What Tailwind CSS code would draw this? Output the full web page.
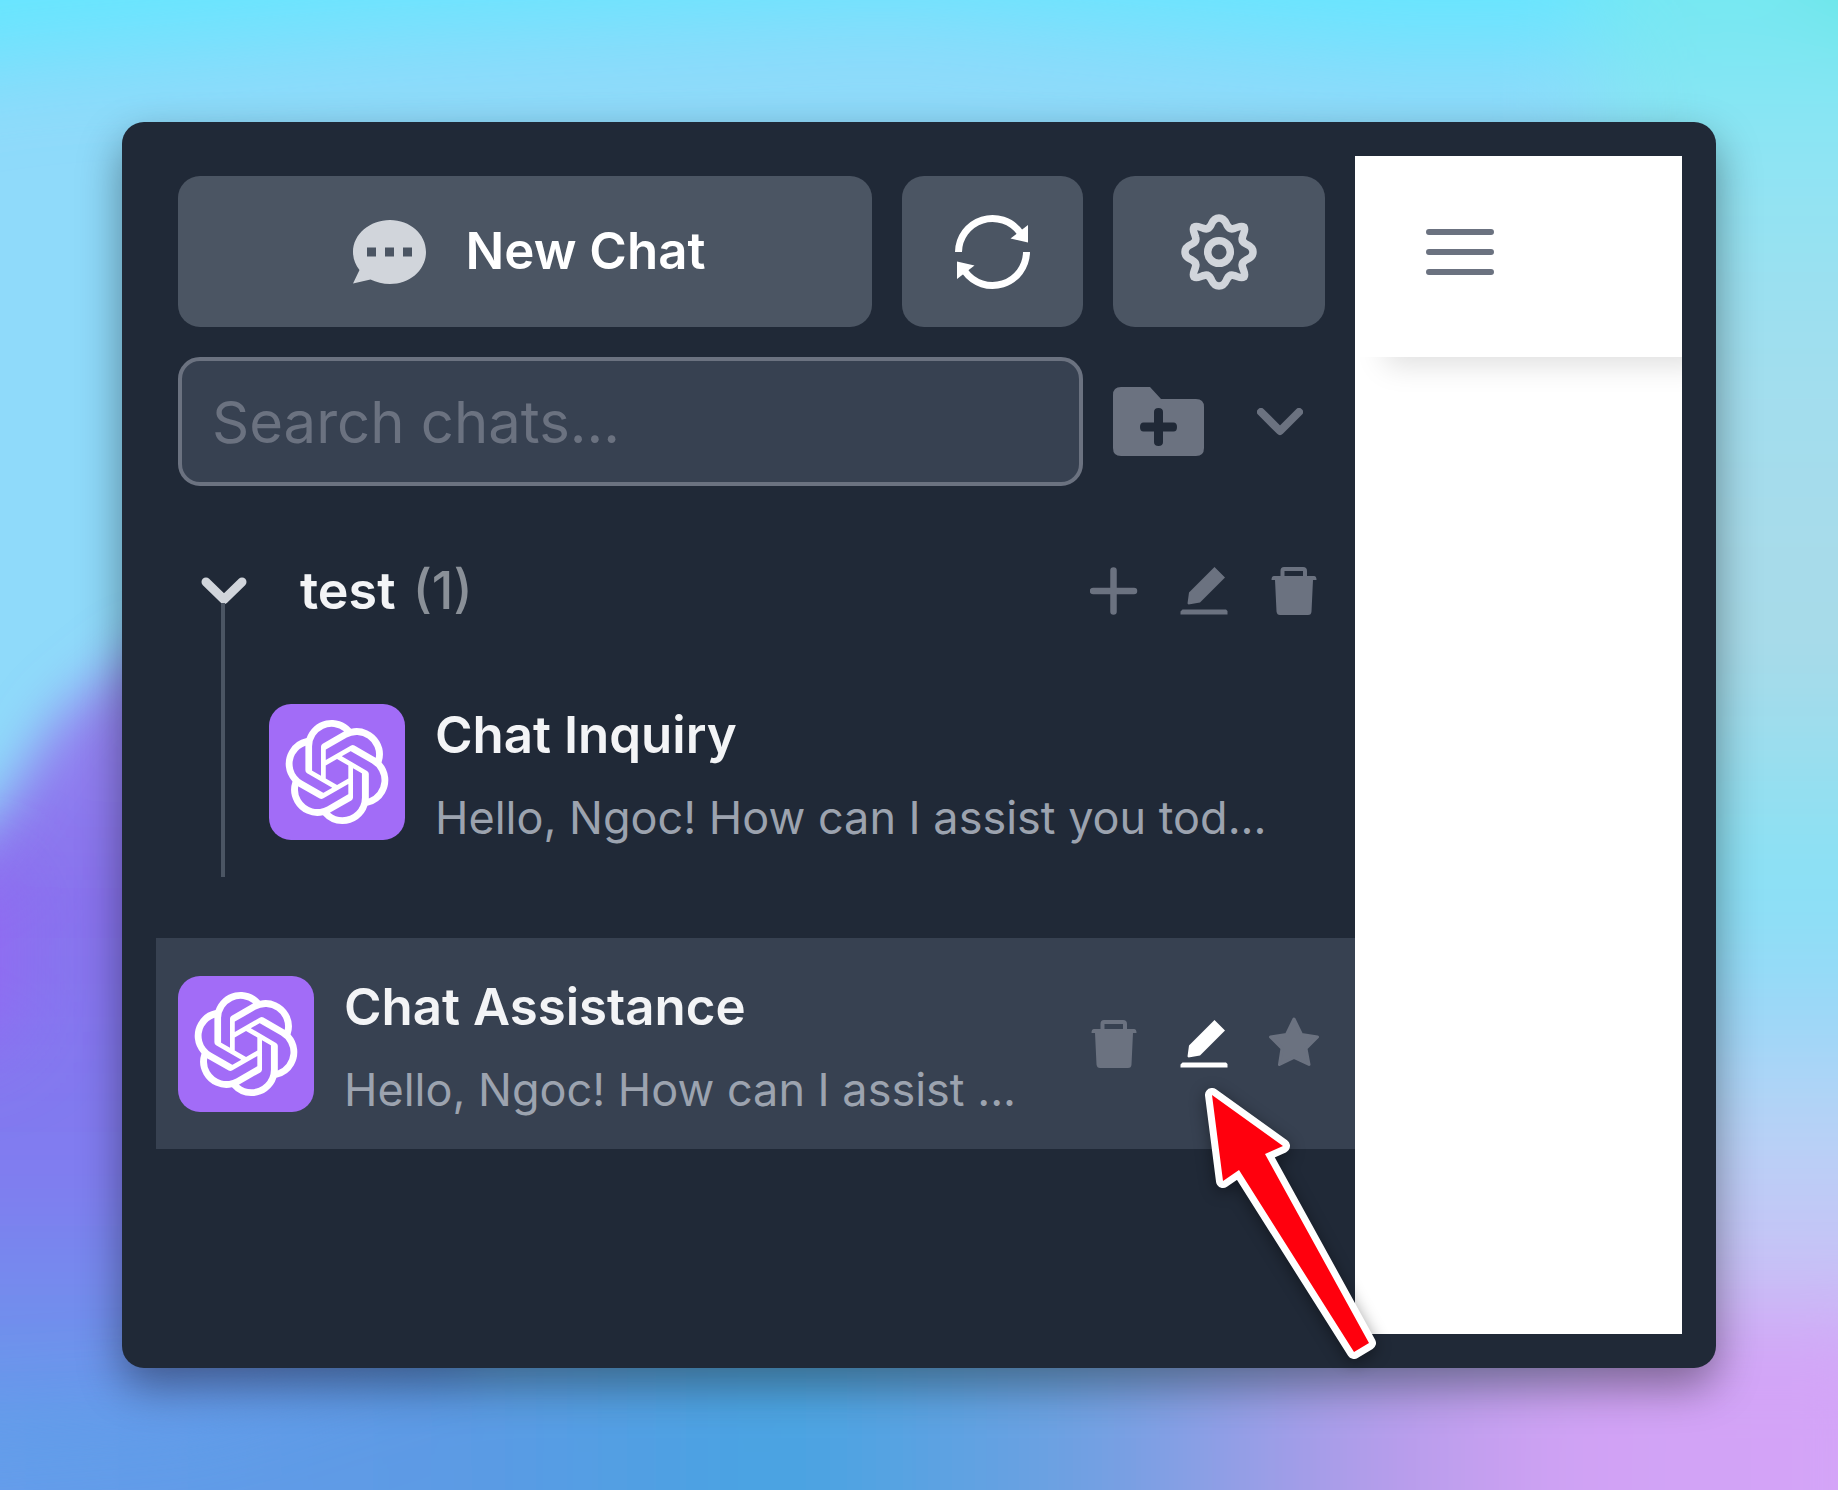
<!DOCTYPE html>
<html lang="en">

<head>
    <meta charset="UTF-8">
    <meta name="viewport" content="width=device-width, initial-scale=1.0">
    <title>Chats</title>
    <script src="https://cdn.jsdelivr.net/npm/@tailwindcss/browser@4"></script>
</head>

<body class="relative flex min-h-screen p-[122px] overflow-hidden bg-[#86d8f8] font-['Inter',sans-serif]">
    <!-- Shared icons -->
    <svg class="absolute size-0" aria-hidden="true">
        <symbol id="icon-trash" viewBox="0 0 48 48">
            <path fill-rule="evenodd" d="M14 0H33Q37 0 37 4V9H44Q46.500 9 46.500 13H43L41.500 44.500Q41.300 48 38 48H10Q7 48 6.500 44.500L5 13H1.500Q1.500 9 4 9H10.500V4Q10.500 0 14 0ZM14.500 4V9H33V4Z" />
        </symbol>
        <symbol id="icon-edit" viewBox="0 0 48 48">
            <path d="M34.500 0L45 10.500L20 35.500L8.500 37.500L7.500 36.500L9 25.500ZM2.500 42.500H46L47.500 44V47.500H.5V44.500Z" />
        </symbol>
        <symbol id="icon-openai" viewBox="0 0 24 24">
            <path d="M22.2819 9.8211a5.9847 5.9847 0 0 0-.5157-4.9108 6.0462 6.0462 0 0 0-6.5098-2.9A6.0651 6.0651 0 0 0 4.9807 4.1818a5.9847 5.9847 0 0 0-3.9977 2.9 6.0462 6.0462 0 0 0 .7427 7.0966 5.98 5.98 0 0 0 .511 4.9107 6.051 6.051 0 0 0 6.5146 2.9001A5.9847 5.9847 0 0 0 13.2599 24a6.0557 6.0557 0 0 0 5.7718-4.2058 5.9894 5.9894 0 0 0 3.9977-2.9001 6.0557 6.0557 0 0 0-.7475-7.0729zm-9.022 12.6081a4.4755 4.4755 0 0 1-2.8764-1.0408l.1419-.0804 4.7783-2.7582a.7948.7948 0 0 0 .3927-.6813v-6.7369l2.02 1.1686a.071.071 0 0 1 .038.052v5.5826a4.504 4.504 0 0 1-4.4945 4.4944zm-9.6607-4.1254a4.4708 4.4708 0 0 1-.5346-3.0137l.142.0852 4.783 2.7582a.7712.7712 0 0 0 .7806 0l5.8428-3.3685v2.3324a.0804.0804 0 0 1-.0332.0615L9.74 19.9502a4.4992 4.4992 0 0 1-6.1408-1.6464zM2.3408 7.8956a4.485 4.485 0 0 1 2.3655-1.9728V11.6a.7664.7664 0 0 0 .3879.6765l5.8144 3.3543-2.0201 1.1685a.0757.0757 0 0 1-.071 0l-4.8303-2.7865A4.504 4.504 0 0 1 2.3408 7.872zm16.5963 3.8558L13.1038 8.364 15.1192 7.2a.0757.0757 0 0 1 .071 0l4.8303 2.7913a4.4944 4.4944 0 0 1-.6765 8.1042v-5.6772a.79.79 0 0 0-.407-.667zm2.0107-3.0231l-.142-.0852-4.7735-2.7818a.7759.7759 0 0 0-.7854 0L9.409 9.2297V6.8974a.0662.0662 0 0 1 .0284-.0615l4.8303-2.7866a4.4992 4.4992 0 0 1 6.6802 4.66zM8.3065 12.863l-2.02-1.1638a.0804.0804 0 0 1-.038-.0567V6.0742a4.4992 4.4992 0 0 1 7.3757-3.4537l-.142.0805L8.704 5.459a.7948.7948 0 0 0-.3927.6813zm1.0976-2.3654l2.602-1.4998 2.6069 1.4998v2.9994l-2.5974 1.4997-2.6067-1.4997Z" />
        </symbol>
    </svg>

    <!-- Wallpaper -->
    <svg class="absolute inset-0 w-full h-full" viewBox="0 0 1838 1490" preserveAspectRatio="none" aria-hidden="true">
        <defs>
            <filter id="soft" x="-50%" y="-50%" width="200%" height="200%">
                <feGaussianBlur stdDeviation="45" />
            </filter>
            <filter id="edge" x="-50%" y="-50%" width="200%" height="200%">
                <feGaussianBlur stdDeviation="26" />
            </filter>
            <linearGradient id="right" gradientUnits="userSpaceOnUse" x1="0" y1="0" x2="0" y2="1490">
                <stop offset="0" stop-color="#74e8f2" />
                <stop offset=".1" stop-color="#8ee4f4" />
                <stop offset=".25" stop-color="#a2deee" />
                <stop offset=".43" stop-color="#a9dae8" />
                <stop offset=".59" stop-color="#88e2f5" />
                <stop offset=".67" stop-color="#98d8f8" />
                <stop offset=".76" stop-color="#b8d2f6" />
                <stop offset=".86" stop-color="#c8c0f6" />
                <stop offset="1" stop-color="#d3a2f6" />
            </linearGradient>
            <linearGradient id="left" gradientUnits="userSpaceOnUse" x1="0" y1="700" x2="0" y2="1490">
                <stop offset="0" stop-color="#9384f0" />
                <stop offset=".25" stop-color="#8872ee" />
                <stop offset=".6" stop-color="#807cf0" />
                <stop offset=".8" stop-color="#7090ec" />
                <stop offset="1" stop-color="#5ba2e8" />
            </linearGradient>
            <linearGradient id="bottom" gradientUnits="userSpaceOnUse" x1="0" y1="0" x2="1838" y2="0">
                <stop offset="0" stop-color="#659ceb" />
                <stop offset=".25" stop-color="#5c9ae4" />
                <stop offset=".43" stop-color="#48a4e2" />
                <stop offset=".6" stop-color="#72a0e2" />
                <stop offset=".75" stop-color="#b49cea" />
                <stop offset=".85" stop-color="#d0a2f4" />
                <stop offset="1" stop-color="#d4a4f8" />
            </linearGradient>
        </defs>
        <rect width="1838" height="1490" fill="#8fdafa" />
        <g filter="url(#soft)">
            <path d="M-200 -200H2038V40L1400 50L900 10L400 30L0 60L-200 100Z" fill="#66e6ff" />
            <path d="M1600 -200H2038V1700H1600Z" fill="url(#right)" />
            <path d="M1740 -200H2038V60L1838 20Z" fill="#64e6e2" />
        </g>
        <path d="M-100 920L0 810L60 715L140 650L400 600L500 1650H-100Z" fill="url(#left)" filter="url(#edge)" />
        <path d="M-200 880L10 880L10 1030L-200 1060Z" fill="#9468f4" filter="url(#soft)" />
        <path d="M-200 1440L200 1410L450 1330H1900V1700H-200Z" fill="url(#bottom)" filter="url(#soft)" />
    </svg>

    <main class="relative flex flex-1 min-w-0 rounded-[22px] bg-[#202937] p-[34px] shadow-[0_18px_44px_rgb(0_0_0/0.4)]">
        <!-- Sidebar -->
        <aside class="flex flex-1 min-w-0 flex-col pt-5">
            <div class="grid grid-cols-[1fr_181px_212px] gap-[30px] pl-[22px] pr-[30px]">
                <button class="flex h-[151px] items-center justify-center gap-10 rounded-[22px] bg-[#4b5563] pl-2 text-[51px] font-semibold text-white">
                    <svg class="w-[73px] h-[64px] text-[#d1d5db]" viewBox="0 0 73 64" fill="currentColor">
                        <path fill-rule="evenodd" d="M37 0C57 0 73 14 73 32S57 64 37 64C30 64 23 62 17.500 59.500L0 63.500L6.500 50C2.500 45 0 39 0 32C0 14 17 0 37 0ZM14 27.500V36.500H23V27.500ZM32 27.500V36.500H41V27.500ZM50 27.500V36.500H59V27.500Z" />
                    </svg>
                    New Chat
                </button>
                <button aria-label="Refresh" class="flex items-center justify-center rounded-[22px] bg-[#4b5563] text-white">
                    <svg class="w-[75px] h-[76px]" viewBox="0 0 75 76" fill="none">
                        <path d="M3.500 38A34 34 0 0 1 65 18.500M71.500 38A34 34 0 0 1 10 57.500" stroke="currentColor" stroke-width="7" />
                        <path d="M73 11V28.500L55.500 24.500ZM2 65V47.500L19.500 51.500Z" fill="currentColor" />
                    </svg>
                </button>
                <button aria-label="Settings" class="flex items-center justify-center rounded-[22px] bg-[#4b5563] text-[#d1d5db]">
                    <svg class="w-[76px] h-[76px]" viewBox="-38 -38 76 76" fill="none" stroke="currentColor" stroke-width="7.500">
                        <circle r="11.300" />
                        <path d="M0 -34C5.500 -34 6.500 -30 8 -27C9.500 -24 12 -22.500 15 -23.500C19 -24.500 22 -27 25 -25C27 -22 24.500 -19 23.500 -15C22.500 -12 24 -9.500 27 -8C30 -6.500 34 -5.500 34 0C34 5.500 30 6.500 27 8C24 9.500 22.500 12 23.500 15C24.500 19 27 22 25 25C22 27 19 24.500 15 23.500C12 22.500 9.500 24 8 27C6.500 30 5.500 34 0 34C-5.500 34 -6.500 30 -8 27C-9.500 24 -12 22.500 -15 23.500C-19 24.500 -22 27 -25 25C-27 22 -24.500 19 -23.500 15C-22.500 12 -24 9.500 -27 8C-30 6.500 -34 5.500 -34 0C-34 -5.500 -30 -6.500 -27 -8C-24 -9.500 -22.500 -12 -23.500 -15C-24.500 -19 -27 -22 -25 -25C-22 -27 -19 -24.500 -15 -23.500C-12 -22.500 -9.500 -24 -8 -27C-6.500 -30 -5.500 -34 0 -34Z" />
                    </svg>
                </button>
            </div>

            <div class="mt-[30px] grid grid-cols-[1fr_212px] items-center gap-[30px] pl-[22px] pr-[30px]">
                <input type="search" aria-label="Search chats" placeholder="Search chats..."
                    class="h-[129px] w-full min-w-0 rounded-[22px] border-4 border-[#6b7280] bg-[#374151] px-[30px] text-[58px] text-white placeholder:text-[#6b7280] outline-none">
                <div class="flex items-center justify-between pr-[22px] text-[#6b7280]">
                    <button aria-label="New folder">
                        <svg class="block w-[91px] h-[69px]" viewBox="0 0 91 69" fill="currentColor">
                            <path fill-rule="evenodd" d="M8 0H37L48 12H83Q91 12 91 20V61Q91 69 83 69H8Q0 69 0 61V8Q0 0 8 0ZM45.500 21Q41 21 41 25V35.500H30.500Q27 35.500 27 40Q27 44.500 30.500 44.500H41V55Q41 59 45.500 59Q50 59 50 55V44.500H60.500Q64 44.500 64 40Q64 35.500 60.500 35.500H50V25Q50 21 45.500 21Z" />
                        </svg>
                    </button>
                    <button aria-label="Sort">
                        <svg class="block w-[46px] h-[28px]" viewBox="0 0 46 28" fill="none" stroke="currentColor" stroke-width="8" stroke-linecap="round" stroke-linejoin="round">
                            <path d="M4 4L23 23L42 4" />
                        </svg>
                    </button>
                </div>
            </div>

            <!-- Folder -->
            <section class="relative mt-[52px]">
                <div class="flex h-[106px] items-center pl-[45px] pr-[37px]">
                    <button aria-label="Collapse folder" class="text-[#d1d5db]">
                        <svg class="block w-[46px] h-[28px]" viewBox="0 0 46 28" fill="none" stroke="currentColor" stroke-width="9" stroke-linecap="round" stroke-linejoin="round">
                            <path d="M5 5L23 22.500L41 5" />
                        </svg>
                    </button>
                    <h2 class="ml-[53px] flex-1 text-[52px] font-semibold text-[#f3f4f6]">test <span class="ml-1 text-[#8a9098] font-medium">(1)</span></h2>
                    <div class="flex items-center gap-[42px] text-[#6b7280]">
                        <button aria-label="Add chat">
                            <svg class="block size-12" viewBox="0 0 48 48" stroke="currentColor" stroke-width="6.500" stroke-linecap="round">
                                <path d="M23.500 3.500V44.500M3 24H44" />
                            </svg>
                        </button>
                        <button aria-label="Rename folder">
                            <svg class="block size-12" fill="currentColor"><use href="#icon-edit" /></svg>
                        </button>
                        <button aria-label="Delete folder">
                            <svg class="block size-12" fill="currentColor"><use href="#icon-trash" /></svg>
                        </button>
                    </div>
                </div>
                <div class="absolute left-[65px] top-[65px] bottom-0 w-1 bg-[#4b5563]"></div>
                <a href="#" class="flex h-[233px] items-center gap-[30px] pl-[113px] pr-[60px] pt-[22px]">
                    <span class="flex size-[136px] shrink-0 items-center justify-center rounded-[22px] bg-[#a26cf7] text-white">
                        <svg class="size-[104px]" fill="currentColor"><use href="#icon-openai" /></svg>
                    </span>
                    <span class="flex min-w-0 flex-1 flex-col gap-2 pt-2">
                        <span class="text-[51px] leading-[75px] font-semibold text-[#f3f4f6]">Chat Inquiry</span>
                        <span class="truncate text-[45px] leading-[75px] text-[#9ca3af]">Hello, Ngoc! How can I assist you tod...</span>
                    </span>
                </a>
            </section>

            <!-- Selected chat -->
            <div class="mt-[61px] flex h-[211px] items-center bg-[#374151] pl-[22px] pr-[37px]">
                <a href="#" class="flex min-w-0 flex-1 items-center gap-[30px]">
                    <span class="flex size-[136px] shrink-0 items-center justify-center rounded-[22px] bg-[#a26cf7] text-white">
                        <svg class="size-[104px]" fill="currentColor"><use href="#icon-openai" /></svg>
                    </span>
                    <span class="flex min-w-0 flex-1 flex-col gap-2 pt-2">
                        <span class="text-[51px] leading-[75px] font-semibold text-[#f3f4f6]">Chat Assistance</span>
                        <span class="truncate text-[45px] leading-[75px] text-[#9ca3af]">Hello, Ngoc! How can I assist ...</span>
                    </span>
                </a>
                <div class="ml-[30px] flex items-center gap-[42px] text-[#6b7280]">
                    <button aria-label="Delete chat">
                        <svg class="block size-12" fill="currentColor"><use href="#icon-trash" /></svg>
                    </button>
                    <button aria-label="Rename chat" class="text-white">
                        <svg class="block size-12" fill="currentColor"><use href="#icon-edit" /></svg>
                    </button>
                    <button aria-label="Favourite chat">
                        <svg class="block size-12 overflow-visible" viewBox="0 0 48 48" fill="currentColor" stroke="currentColor" stroke-width="3" stroke-linejoin="round">
                            <path d="M24 -1L31.500 14.500L47.500 17L36 28.500L39 44.500L24 37.500L9.500 44.500L12 28.500L.5 17L16.500 14.500Z" />
                        </svg>
                    </button>
                </div>
            </div>
        </aside>

        <!-- Chat pane -->
        <section class="w-[327px] shrink-0 overflow-hidden bg-white">
            <header class="flex h-[201px] items-center bg-white pl-[71px] shadow-[26px_12px_28px_-4px_rgb(0_0_0/0.13)]">
                <button aria-label="Menu" class="mb-[10px] text-[#6b7280]">
                    <svg class="block w-[69px] h-[46px]" viewBox="0 0 69 46" stroke="currentColor" stroke-width="6" stroke-linecap="round">
                        <path d="M3 3H65M3 23H65M3 43H65" />
                    </svg>
                </button>
            </header>
        </section>

        <!-- Pointer annotation -->
        <svg class="pointer-events-none absolute right-[336px] bottom-[4px] w-[180px] h-[284px] overflow-visible drop-shadow-[0_4px_8px_rgb(0_0_0/0.4)]" viewBox="1200 1080 180 284" aria-hidden="true">
            <path d="M1212 1095L1283 1146L1265 1154L1369 1343L1354 1352L1239 1170L1223 1181Z" fill="#ff000d" stroke="#fff" stroke-width="14" stroke-linejoin="round" paint-order="stroke" />
        </svg>
    </main>
</body>

</html>
